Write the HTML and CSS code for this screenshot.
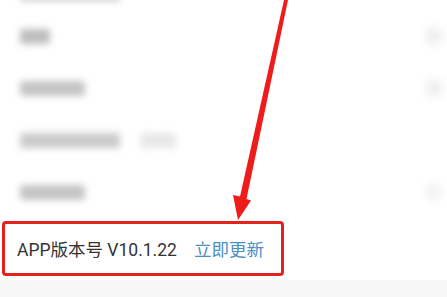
FILE: index.html
```html
<!DOCTYPE html>
<html>
<head>
  <title>设置</title>
  <link rel="stylesheet" href="styles.css">
</head>
<body>
  <section class="settings">
    <div class="row cut"><span class="blur wide"></span></div>
    <div class="row"><span class="blur short"></span><span class="chev"></span></div>
    <div class="row"><span class="blur mid"></span><span class="chev"></span></div>
    <div class="row"><span class="blur wide"></span><span class="blur faint"></span></div>
    <div class="row"><span class="blur mid"></span><span class="chev light"></span></div>

    <div class="version">
      <span class="label">APP版本号 V10.1.22</span>
      <a class="update">立即更新</a>
    </div>
  </section>

  <!-- annotation arrow drawn over the screenshot -->
  <svg class="arrow" width="447" height="297" viewBox="0 0 447 297">
    <polygon points="284,0 288,0 246.5,199 251,200.5 238,220 233,195 240,196.5" fill="#ee1c1a"/>
  </svg>
</body>
</html>
```

FILE: styles.css
```css
* {
  box-sizing: border-box;
}

html, body {
  margin: 0;
  width: 447px;
  height: 297px;
  overflow: hidden;
}

body {
  position: relative;
  background-color: #f7f7f7;
  font-family: Roboto, "Noto Sans CJK SC", sans-serif;
}

.settings {
  background-color: #fff;
  padding-bottom: 4px;
}

.row {
  height: 52px;
  display: flex;
  align-items: center;
  padding: 0 4px 0 20px;
  gap: 20px;
}

.row.cut {
  height: 10px;
  align-items: flex-start;
}

.row.cut .blur {
  height: 6px;
  margin-top: -5px;
}

.blur {
  display: block;
  height: 15px;
  background-color: #c4c4c4;
  border-radius: 3px;
  filter: blur(3.5px);
}

.blur.short { width: 30px; background-color: #bdbdbd; }
.blur.mid { width: 65px; }
.blur.wide { width: 100px; background-color: #cacaca; }
.blur.faint { width: 36px; background-color: #e8e8e8; }

.chev {
  margin-left: auto;
  width: 18px;
  height: 18px;
  border-radius: 50%;
  background-color: #efefef;
  filter: blur(4px);
}

.chev.light { background-color: #f3f3f3; }

.version {
  margin: 3px 0 0 2px;
  width: 282px;
  height: 55px;
  border: 3.5px solid #e3211d;
  border-radius: 4px;
  display: flex;
  align-items: center;
  padding-left: 12px;
  gap: 17px;
  font-size: 17.5px;
  background-color: #fff;
}

.label {
  color: #333;
}

.update {
  color: #4b8fc4;
}

.arrow {
  position: absolute;
  top: 0;
  left: 0;
}
```
